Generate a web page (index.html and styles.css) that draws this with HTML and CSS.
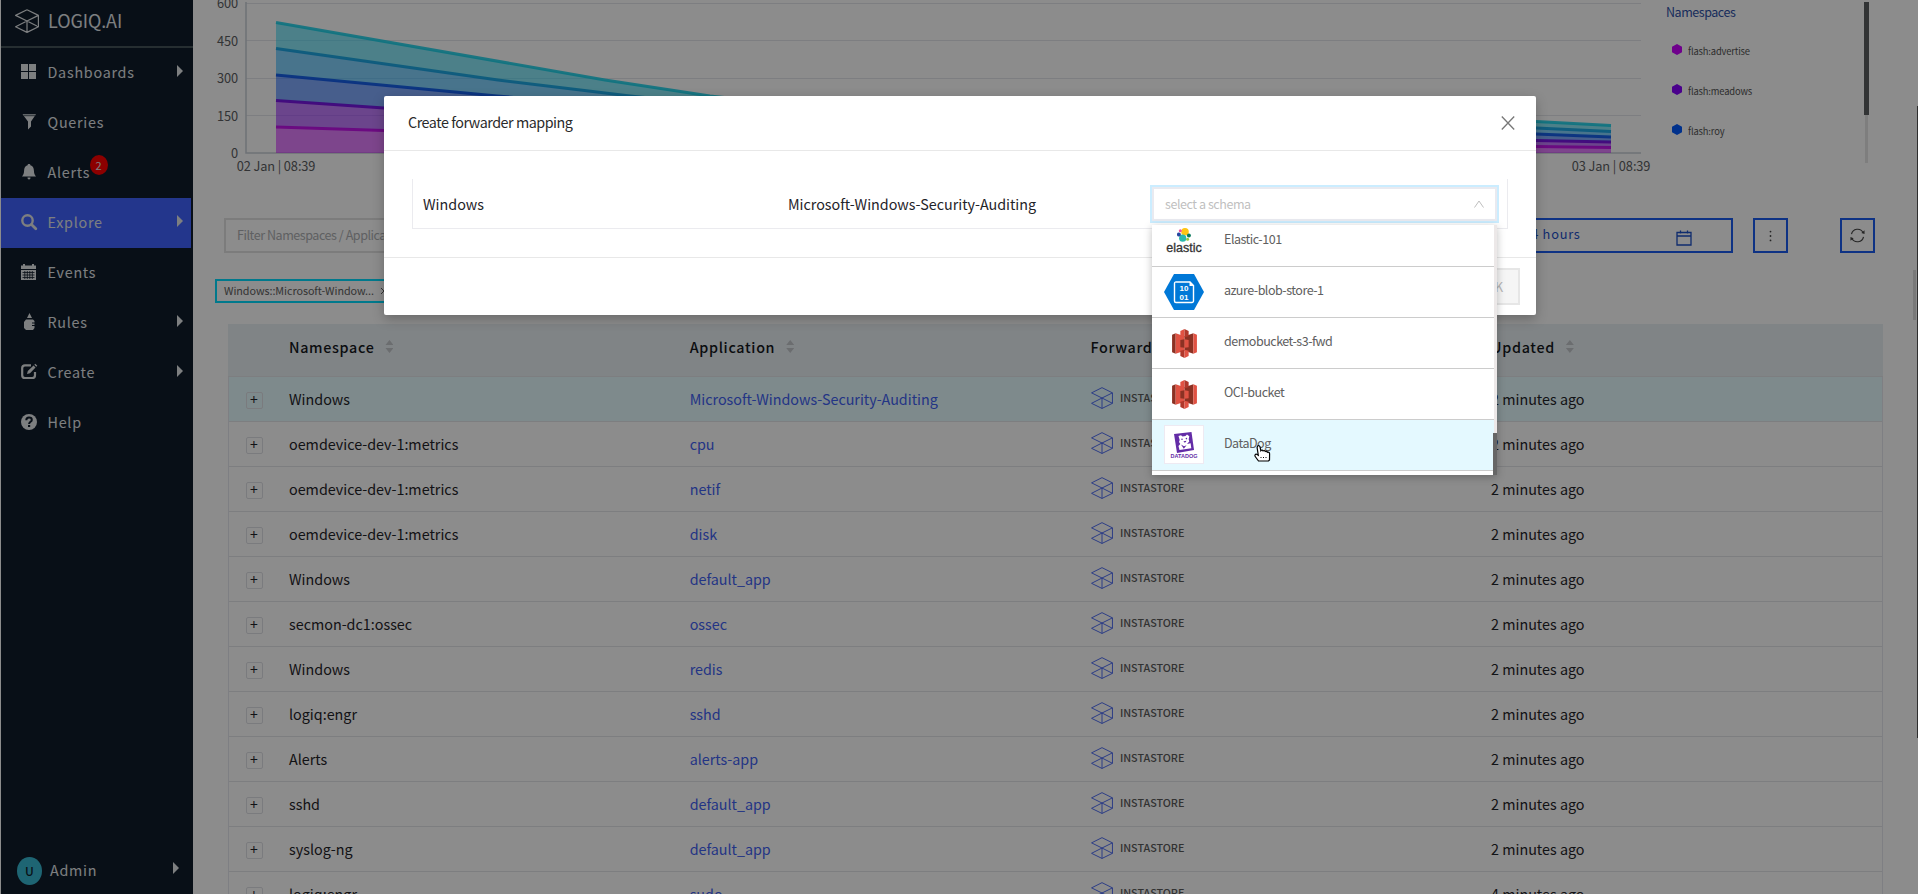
FILE: index.html
```html
<!DOCTYPE html>
<html lang="en">
<head>
<meta charset="utf-8">
<title>LOGIQ.AI - Explore</title>
<link rel="stylesheet" href="styles.css">
</head>
<body>
<svg class="defs" width="0" height="0">
  <symbol id="cube" viewBox="0 0 24 24"><path d="M12 .7 23.4 6.4v11.4L12 23.4.6 17.8 12 12l11.4 5.8M12 .7.6 6.4 12 12l11.4-5.6M12 12v11.4" fill="none" stroke="currentColor" stroke-linejoin="round"/></symbol>
  <symbol id="s3" viewBox="0 0 24 28">
    <path d="M0 5.5 3.500 4v20L0 22.500z" fill="#8c3123"/><path d="M3.500 4 12 7v14l-8.500 3z" fill="#e05243"/>
    <path d="M20.500 4 12 7v14l8.500 3z" fill="#8c3123"/><path d="M20.500 4l3.500 1.500v17L20.500 24z" fill="#e05243"/>
    <path d="M8 2 12 0v8L8 7z" fill="#e05243"/><path d="M16 2 12 0v8l4-1z" fill="#b0382b"/>
    <path d="M8 10.500 12 10v8l-4-.5z" fill="#8c3123"/><path d="M16 10.500 12 10v8l4-.5z" fill="#e05243"/>
    <path d="M8 21l4-1v8l-4-2z" fill="#b0382b"/><path d="M16 21l-4-1v8l4-2z" fill="#e05243"/>
  </symbol>
</svg>
<div class="app">
  <aside class="side">
    <div class="brand"><svg class="brand-icon"><use href="#cube"/></svg><span>LOGIQ.AI</span></div>
    <nav class="menu">
      <a class="item"><svg class="mi" viewBox="0 0 16 16"><path d="M0 0h7v7H0zM8 0h7v7H8zM0 8h7v7H0zM8 8h7v7H8z"/></svg><span>Dashboards</span><i class="caret"></i></a>
      <a class="item"><svg class="mi" viewBox="0 0 16 16"><path d="M1.500.2h13.500L10 7.500v5L7 15.500v-8z"/><path d="M2.500 1.700h11.500" stroke="#0f1c2a" stroke-width=".7"/></svg><span>Queries</span></a>
      <a class="item"><svg class="mi" viewBox="0 0 16 16"><path d="M8 0c.9 0 1.400.5 1.400 1.300C12 2 12.800 4 12.900 6.500c.1 3 .7 4.500 2.100 6H1c1.400-1.500 2-3 2.100-6C3.200 4 4 2 6.600 1.300 6.600.5 7.100 0 8 0zM6.500 13.500h3c0 1-.5 2-1.500 2s-1.500-1-1.500-2z"/></svg><span class="has-badge">Alerts<b class="badge">2</b></span></a>
      <a class="item active"><svg class="mi" viewBox="0 0 16 16"><circle cx="6.500" cy="6.500" r="5.200" fill="none" stroke="currentColor" stroke-width="2.400"/><path d="M10.500 10.500l4.300 4.300" stroke="currentColor" stroke-width="2.800" stroke-linecap="round"/></svg><span>Explore</span><i class="caret"></i></a>
      <a class="item"><svg class="mi" viewBox="0 0 16 16"><path d="M0 1.500h2V0h2v1.500h7V0h2v1.500h2V5H0zM0 6h15v10H0z"/><path d="M1.500 8.500h12M1.500 11h12M1.500 13.500h12M3.800 7v8M6.300 7v8M8.800 7v8M11.300 7v8" stroke="#0f1c2a" stroke-width=".8"/></svg><span>Events</span></a>
      <a class="item"><svg class="mi" viewBox="0 0 16 16"><path d="M8.500-1 11 4H6zM5 5.500h7l1.500 1.500v1.500H11v1h2.500v1.500H11v1h2.500V14l-1.500 2H5l-2-2V8z"/></svg><span>Rules</span><i class="caret"></i></a>
      <a class="item"><svg class="mi" viewBox="0 0 16 16"><path d="M10 1.300H4A2.800 2.800 0 0 0 1.200 4v7.200A2.800 2.800 0 0 0 4 14h7.200a2.800 2.800 0 0 0 2.800-2.800V8" fill="none" stroke="currentColor" stroke-width="2.200"/><path d="M6 10l.8-3L12.500 1.500l2 2L9 9.200zM13.300.8l1-1 2 2-1 1z"/></svg><span>Create</span><i class="caret"></i></a>
      <a class="item"><svg class="mi" viewBox="0 0 16 16"><circle cx="8" cy="8" r="8"/><path d="M5.300 6.200C5.300 4.400 6.400 3.600 8 3.600s2.800.9 2.800 2.300c0 1.900-2.700 1.900-2.700 4" fill="none" stroke="#0f1c2a" stroke-width="2"/><path d="M7 11h2.200v2H7z" fill="#0f1c2a"/></svg><span>Help</span></a>
    </nav>
    <div class="user"><span class="avatar">U</span><span>Admin</span><i class="caret"></i></div>
  </aside>
  <main class="main">
    <section class="top">
      <svg class="chart" viewBox="193 0 1462 180">
        <g class="grid"><path d="M246 3.500H1641M246 40.500H1641M246 78.500H1641M246 115.500H1641"/></g>
        <path class="axis" d="M246 2V153H1641"/>
        <g fill-opacity=".5">
          <path fill="#18d6f4" d="M276 22.500 605 80 710 96 900 116 1536 121.500 1611 125.500V131.500L1536 128 900 123 630 96 498 80 276 48.500z"/>
          <path fill="#0aa8ff" d="M276 48.500 498 80 630 96 900 123 1536 128 1611 131.500V137L1536 134 900 130 497 96 276 75z"/>
          <path fill="#045aff" d="M276 75 497 96 900 130 1536 134 1611 137V142L1536 140.500 900 138 384 108 276 100.500z"/>
          <path fill="#8700ff" d="M276 100.500 384 108 900 138 1536 140.500 1611 142V147.500L1536 146.500 900 145 384 130.500 276 127z"/>
          <path fill="#ca00ff" d="M276 127 384 130.500 900 145 1536 146.500 1611 147.500V153H276z"/>
        </g>
        <g fill="none" stroke-width="3" stroke-opacity=".85">
          <path stroke="#10cfe8" d="M276 22.500 605 80 710 96 900 116 1536 121.500 1611 125.500"/>
          <path stroke="#0a9fe0" d="M276 48.500 498 80 630 96 900 123 1536 128 1611 131.500"/>
          <path stroke="#0450e8" d="M276 75 497 96 900 130 1536 134 1611 137"/>
          <path stroke="#7000e0" d="M276 100.500 384 108 900 138 1536 140.500 1611 142"/>
          <path stroke="#c000e8" d="M276 127 384 130.500 900 145 1536 146.500 1611 147.500"/>
        </g>
        <g class="ticks" text-anchor="end"><text x="238" y="8">600</text><text x="238" y="45.500">450</text><text x="238" y="83">300</text><text x="238" y="120.500">150</text><text x="238" y="158">0</text></g>
        <g class="ticks" text-anchor="middle"><text x="276" y="171">02 Jan | 08:39</text><text x="1611" y="171">03 Jan | 08:39</text></g>
      </svg>
      <div class="legend">
        <div class="legend-list">
          <h4>Namespaces</h4>
          <p><svg viewBox="0 0 10 11"><path fill="#ca00ff" d="M5 0l5 2.700v5.600L5 11 0 8.300V2.700z"/></svg>flash:advertise</p>
          <p><svg viewBox="0 0 10 11"><path fill="#8700ff" d="M5 0l5 2.700v5.600L5 11 0 8.300V2.700z"/></svg>flash:meadows</p>
          <p><svg viewBox="0 0 10 11"><path fill="#005aff" d="M5 0l5 2.700v5.600L5 11 0 8.300V2.700z"/></svg>flash:roy</p>
        </div>
        <div class="legend-bar"><i></i></div>
      </div>
    </section>
    <section class="tools">
      <div class="filter">Filter Namespaces / Applications</div>
      <div class="range"><span>Last 24 hours</span><svg viewBox="0 0 16 16"><path d="M1 2.500h14V15H1zM1 6h14M4.500.5v3M11.500.5v3" fill="none" stroke="currentColor" stroke-width="1.300"/></svg></div>
      <div class="sq kebab"><svg viewBox="0 0 16 16"><circle cx="8" cy="2.500" r="1.100"/><circle cx="8" cy="8" r="1.100"/><circle cx="8" cy="13.500" r="1.100"/></svg></div>
      <div class="sq"><svg viewBox="0 0 16 16"><path d="M1.600 6.600A6.600 6.600 0 0 1 14 5M14.400 9.400A6.600 6.600 0 0 1 2 11" fill="none" stroke="currentColor" stroke-width="1.200"/><path d="M15.500 2.500v4l-3.400-1.300zM.5 13.500v-4l3.400 1.300z"/></svg></div>
    </section>
    <section class="tags"><div class="tag">Windows::Microsoft-Window...<svg viewBox="0 0 8 8"><path d="M1 1l6 6M7 1L1 7" stroke="currentColor"/></svg></div></section>
    <section class="table">
      <div class="tr th"><span></span><span>Namespace<i class="sort"></i></span><span>Application<i class="sort"></i></span><span>Forwarders</span><span>Updated<i class="sort"></i></span></div>
      <div class="tr sel"><span><i class="plus">+</i></span><span>Windows</span><a>Microsoft-Windows-Security-Auditing</a><span class="fw"><svg><use href="#cube"/></svg>INSTASTORE</span><span>2 minutes ago</span></div>
      <div class="tr"><span><i class="plus">+</i></span><span>oemdevice-dev-1:metrics</span><a>cpu</a><span class="fw"><svg><use href="#cube"/></svg>INSTASTORE</span><span>2 minutes ago</span></div>
      <div class="tr"><span><i class="plus">+</i></span><span>oemdevice-dev-1:metrics</span><a>netif</a><span class="fw"><svg><use href="#cube"/></svg>INSTASTORE</span><span>2 minutes ago</span></div>
      <div class="tr"><span><i class="plus">+</i></span><span>oemdevice-dev-1:metrics</span><a>disk</a><span class="fw"><svg><use href="#cube"/></svg>INSTASTORE</span><span>2 minutes ago</span></div>
      <div class="tr"><span><i class="plus">+</i></span><span>Windows</span><a>default_app</a><span class="fw"><svg><use href="#cube"/></svg>INSTASTORE</span><span>2 minutes ago</span></div>
      <div class="tr"><span><i class="plus">+</i></span><span>secmon-dc1:ossec</span><a>ossec</a><span class="fw"><svg><use href="#cube"/></svg>INSTASTORE</span><span>2 minutes ago</span></div>
      <div class="tr"><span><i class="plus">+</i></span><span>Windows</span><a>redis</a><span class="fw"><svg><use href="#cube"/></svg>INSTASTORE</span><span>2 minutes ago</span></div>
      <div class="tr"><span><i class="plus">+</i></span><span>logiq:engr</span><a>sshd</a><span class="fw"><svg><use href="#cube"/></svg>INSTASTORE</span><span>2 minutes ago</span></div>
      <div class="tr"><span><i class="plus">+</i></span><span>Alerts</span><a>alerts-app</a><span class="fw"><svg><use href="#cube"/></svg>INSTASTORE</span><span>2 minutes ago</span></div>
      <div class="tr"><span><i class="plus">+</i></span><span>sshd</span><a>default_app</a><span class="fw"><svg><use href="#cube"/></svg>INSTASTORE</span><span>2 minutes ago</span></div>
      <div class="tr"><span><i class="plus">+</i></span><span>syslog-ng</span><a>default_app</a><span class="fw"><svg><use href="#cube"/></svg>INSTASTORE</span><span>2 minutes ago</span></div>
      <div class="tr"><span><i class="plus">+</i></span><span>logiq:engr</span><a>sudo</a><span class="fw"><svg><use href="#cube"/></svg>INSTASTORE</span><span>4 minutes ago</span></div>
    </section>
  </main>
  <i class="bar-inner"></i><i class="bar-page"></i>
</div>
<div class="mask">
  <div class="modal">
    <header><span>Create forwarder mapping</span><svg viewBox="0 0 14 14"><path d="M.8.500l12.400 13M13.200.500L.8 13.500" stroke="currentColor" stroke-width="1.300"/></svg></header>
    <div class="body">
      <div class="map">
        <span class="ns">Windows</span><span class="an">Microsoft-Windows-Security-Auditing</span>
        <div class="select"><span>select a schema</span><svg viewBox="0 0 12 12"><path d="M1.500 9.500L6 3l4.500 6.500" fill="none" stroke="currentColor"/></svg>
          <div class="drop">
            <div class="opts">
              <div class="opt first"><div class="ico elastic"><svg viewBox="0 0 14 14"><circle cx="8" cy="3.800" r="3.800" fill="#fec514"/><circle cx="5.700" cy="10.200" r="3.600" fill="#2bb9ad"/><circle cx="3.300" cy="2.800" r="1.500" fill="#f04e98"/><circle cx="1.900" cy="6.500" r="2" fill="#27469f"/><circle cx="11.900" cy="7.600" r="2" fill="#0b7a5c"/><circle cx="10.600" cy="11.300" r="1.500" fill="#93c83e"/></svg><b>elastic</b></div><span>Elastic-101</span></div>
              <div class="opt"><div class="ico"><svg viewBox="0 0 40 36"><path d="M10 0h20l10 18-10 18H10L0 18z" fill="#0078d7"/><path d="M12.500 8H26l3.500 3.500V27a1.500 1.500 0 0 1-1.500 1.500H12A1.500 1.500 0 0 1 10.500 27V9.500A1.500 1.500 0 0 1 12.500 8z" fill="none" stroke="#fff" stroke-width="1.400"/><path d="M25.500 7.500v4.500H30z" fill="#fff"/><g class="bits"><text x="20" y="17.300">10</text><text x="20" y="25.500">01</text></g></svg></div><span>azure-blob-store-1</span></div>
              <div class="opt"><div class="ico s3"><svg><use href="#s3"/></svg></div><span>demobucket-s3-fwd</span></div>
              <div class="opt"><div class="ico s3"><svg><use href="#s3"/></svg></div><span>OCI-bucket</span></div>
              <div class="opt hover"><div class="ico dog"><svg viewBox="0 0 20 21"><path d="M0 2 17.500 0 20 18 3 21z" fill="#632ca6"/><path d="M4.500 4l2.500-.8 1.500 1.300 3-.6 1.500-1.400 2.300 1.700-.6 3 .6 2.300-2.300 2.500 3.600-.8.7 5-11.800 1.800L4.500 14l1.800-2-1.300-2 .7-2z" fill="#fff"/><circle cx="8" cy="7.300" r=".8" fill="#632ca6"/><circle cx="12.400" cy="6.600" r=".8" fill="#632ca6"/><path d="M9.500 9.300l3-.6-.8 1.600-1.500.3zM7 12.500l3 1.800 2.600-1-2.800 3.400z" fill="#632ca6"/></svg><b>DATADOG</b></div><span>DataDog</span></div>
            </div>
            <div class="opt-bar"><i></i></div>
          </div>
        </div>
      </div>
    </div>
    <footer><div class="ok">OK</div></footer>
  </div>
</div>
<svg class="cursor" viewBox="0 0 17 17"><path d="M3.500 1.200C4.500.2 5.800.8 6 2l.8 3.700c.5-.8 1.900-.8 2.300.2.600-.6 1.900-.5 2.200.5.700-.4 1.900-.1 2.100.9.900-.4 2.200.1 2.200 1.500L15.500 15l-1 1H4.500L1.200 11.500C.4 10.400 1.300 8.800 2.700 9.300L4.300 10.300 3.100 2.500z" fill="#fff" stroke="#000" stroke-width="1.200"/><path d="M6.500 12.500h1M9 12.500h1M11.500 12.500h1" stroke="#000"/></svg>
</body>
</html>
```
FILE: styles.css
```css
* { box-sizing: border-box; }
body { margin: 0; height: 894px; overflow: hidden; background: #fff; font: 14.33px/20px "Noto Sans CJK SC", "Noto Sans", sans-serif; color: #1f2329; }
i { font-style: normal; }
.defs { position: absolute; }
.app { display: flex; height: 894px; padding-left: 1px; background: #fff; overflow: hidden; position: relative; }

/* sidebar */
.side { width: 192px; flex: none; background: #0f1c2a; color: #e4e7ea; display: flex; flex-direction: column; letter-spacing: .75px; }
.brand { height: 48px; border-bottom: 2px solid #46545a; display: flex; align-items: center; padding: 0 0 6px 14px; gap: 9px; font-size: 18px; letter-spacing: -.1px; flex: none; }
.brand-icon { width: 24px; height: 24px; margin-top: 1px; stroke-width: 1.2; }
.menu { flex: 1; }
.item { height: 50px; display: flex; align-items: center; padding-left: 20px; width: 190px; position: relative; }
.item > span { margin-top: -2px; }
.item.active { background: #4163ff; }
.mi { width: 16px; height: 16px; margin-right: 10.5px; margin-top: -2px; fill: currentColor; overflow: visible; }
.caret { position: absolute; right: 8px; top: 17px; border-left: 6px solid; border-top: 6px solid transparent; border-bottom: 6px solid transparent; }
.has-badge { position: relative; }
.badge { position: absolute; left: 42px; top: -7px; width: 18px; height: 20px; border-radius: 50%; background: #ff0000; font: 11px/20px "Noto Sans CJK SC", sans-serif; text-align: center; letter-spacing: 0; }
.user { height: 46px; display: flex; align-items: center; padding-left: 16px; gap: 8px; position: relative; }
.user span + span { margin-top: -2px; }
.avatar { width: 25px; height: 28px; border-radius: 50%; background: #38b8d2; color: #0f1c2a; font-size: 12px; line-height: 28px; font-weight: 500; text-align: center; letter-spacing: 0; }
.user .caret { right: 14px; top: 14px; }

/* chart */
.main { flex: 1; min-width: 0; }
.top { display: flex; height: 218px; }
.chart { width: 1462px; height: 180px; flex: none; }
.grid path { stroke: #e3e5ec; }
.axis { fill: none; stroke: #c9ced8; stroke-width: 1.5; }
.ticks text { font-size: 12.8px; letter-spacing: -.1px; fill: #5c5e62; }
.legend { display: flex; flex: 1; padding-left: 11px; }
.legend-list { width: 199px; }
.legend h4 { margin: 2px 0 19px; font-size: 12.5px; font-weight: 400; letter-spacing: -.45px; color: #2f51a8; }
.legend p { margin: 0 0 20px; padding-left: 6px; font: 9.400px/20px "Noto Sans CJK SC", sans-serif; letter-spacing: -.15px; color: #555; display: flex; align-items: center; gap: 6px; }
.legend p svg { width: 10px; height: 11px; margin-top: -4px; }
.legend-bar { width: 3px; height: 161px; margin-top: 2px; background: #e6e6e6; }
.legend-bar i { display: block; width: 5px; height: 113px; margin-left: -1px; background: #5c5f62; }

/* toolbar */
.tools { display: flex; height: 35px; padding-left: 31px; color: #1d50c8; }
.filter { width: 800px; border: 2px solid #e2e2e2; padding: 0 11px; line-height: 30px; font-size: 12.54px; letter-spacing: -.45px; color: #aeb0b3; }
.range { width: 309px; margin-left: 400px; border: 2px solid #1a5cf0; display: flex; align-items: center; justify-content: space-between; padding: 0 39px 4px 66px; font-size: 12.800px; letter-spacing: .75px; }
.range svg { width: 16px; height: 16px; margin-top: 8px; }
.sq { width: 35px; margin-left: 52px; border: 2px solid #1a5cf0; display: flex; align-items: center; justify-content: center; color: #444; }
.kebab { margin-left: 20px; }
.sq svg { width: 15px; height: 15px; fill: currentColor; }
.kebab svg { width: 13px; height: 14px; }
.tags { padding: 26px 0 21px 22px; }
.tag { display: flex; align-items: center; gap: 6px; width: 178px; height: 24px; border: 2px solid #00dcff; padding-left: 7px; font-size: 10.750px; letter-spacing: -.04px; color: #606060; }
.tag svg { width: 8px; height: 8px; }

/* table */
.table { margin-left: 35px; width: 1655px; border: solid #e6e8ee; border-width: 0 1px; }
.tr { display: grid; grid-template-columns: 52px repeat(4, 400.7px); height: 45px; align-items: center; border-bottom: 1px solid #e4e6ea; overflow: hidden; }
.tr > * { padding-left: 8px; }
.tr a { color: #4161f2; letter-spacing: -.02px; }
.tr.sel { background: #e6fbff; }
.tr.th { height: 53px; background: #e9f0f5; font-weight: 500; letter-spacing: .67px; margin: 0 -1px; padding-left: 1px; padding-bottom: 6px; color: #15181c; }
.sort { display: inline-block; width: 8px; height: 13px; margin-left: 11px; background: #c3c6ca; clip-path: polygon(50% 0, 100% 38%, 0 38%, 0 62%, 100% 62%, 50% 100%, 0 62%, 0 38%); }
.tr .plus { display: block; width: 17px; height: 17px; margin-left: 9px; margin-top: 2px; border: 1px solid #dfe1e6; border-radius: 2px; text-align: center; line-height: 13px; font-size: 14px; text-indent: -1px; }
.tr .fw { display: flex; align-items: center; gap: 7px; font-size: 10.750px; font-weight: 500; color: #5c5c5c; line-height: 18px; padding: 0 0 2px 8.500px; }
.fw svg { width: 22px; height: 22px; color: #4161f2; }
.bar-inner { position: absolute; left: 1913px; top: 270px; width: 3px; height: 50px; background: #dcdcdc; }
.bar-page { position: absolute; left: 1917px; top: 106px; width: 1px; height: 632px; background: #555; }

/* modal */
.mask { position: absolute; inset: 0; background: rgba(0,0,0,.45); padding: 96px 382px 0 384px; }
.modal { height: 219px; background: #fff; border-radius: 2px; box-shadow: 0 4px 12px rgba(0,0,0,.25); display: flex; flex-direction: column; }
.modal header { height: 55px; flex: none; border-bottom: 1px solid #e8e8e8; display: flex; align-items: center; justify-content: space-between; padding: 0 21px 0 24px; font-size: 14.33px; letter-spacing: -.47px; color: #2a2a2a; }
.modal header span { margin-top: -2px; }
.modal header svg { width: 14px; height: 14px; color: #777; }
.body { height: 107px; padding: 28px; border-bottom: 1px solid #e8e8e8; flex: none; }
.map { display: flex; align-items: center; height: 50px; border: 1px solid #ebebef; border-top: 0; padding-left: 10px; }
.ns { width: 365px; }
.an { width: 364px; letter-spacing: -.02px; }
.select { width: 345px; height: 34px; border: 2px solid #e9eaf0; box-shadow: 0 0 0 2px #cbedff; display: flex; align-items: center; justify-content: space-between; padding: 0 10px 0 11px; font-size: 12.540px; letter-spacing: -.45px; color: #bfbfbf; position: relative; }
.select > svg { width: 12px; height: 12px; }
.drop { position: absolute; left: -2px; top: 36px; width: 345px; height: 250px; display: flex; overflow: hidden; background: #fff; box-shadow: 0 2px 8px rgba(0,0,0,.25); color: #606060; letter-spacing: -.5px; }
.opts { flex: 1; }
.opt { height: 51px; display: flex; align-items: center; gap: 20px; padding: 0 12px; border-bottom: 1px solid #ccc; }
.opt > span { margin-top: -3px; }
.opt.first { height: 42px; padding-bottom: 10px; }
.opt.hover { background: #e4f9ff; }
.ico { width: 40px; height: 36px; display: flex; flex-direction: column; align-items: center; justify-content: center; }
.ico > svg { width: 40px; height: 36px; }
.elastic > svg { width: 14px; height: 14px; }
.elastic { margin-top: 3px; }
.elastic b { font: 12.500px/13px "Liberation Sans", Arial, sans-serif; letter-spacing: 0; -webkit-text-stroke: .3px #333; color: #333; }
.bits text { font: bold 8px "Liberation Sans", Arial, sans-serif; letter-spacing: 0; fill: #fff; text-anchor: middle; }
.ico.s3 > svg { width: 25px; height: 29px; }
.ico.s3 { padding-top: 2px; }
.ico.dog { height: 39px; background: #fff; border: 1px solid #eeeaf2; padding-top: 3px; }
.dog > svg { width: 20px; height: 21px; }
.dog b { font: bold 5.500px/7px "Liberation Sans", Arial, sans-serif; letter-spacing: 0; color: #632ca6; }
.opt-bar { width: 3px; background: #ece8e8; }
.opt-bar i { display: block; width: 4px; height: 42px; margin: 208px 0 0 -1px; background: #666; }
.modal footer { padding: 10px 16px; display: flex; justify-content: flex-end; }
.ok { width: 60px; height: 37px; border: 2px solid #e6e6e6; background: #f5f5f5; color: #b4b4b4; text-align: right; padding-right: 15px; line-height: 33px; font-size: 12.540px; }
.cursor { position: absolute; left: 1254px; top: 445px; width: 17px; height: 17px; overflow: visible; }
```
